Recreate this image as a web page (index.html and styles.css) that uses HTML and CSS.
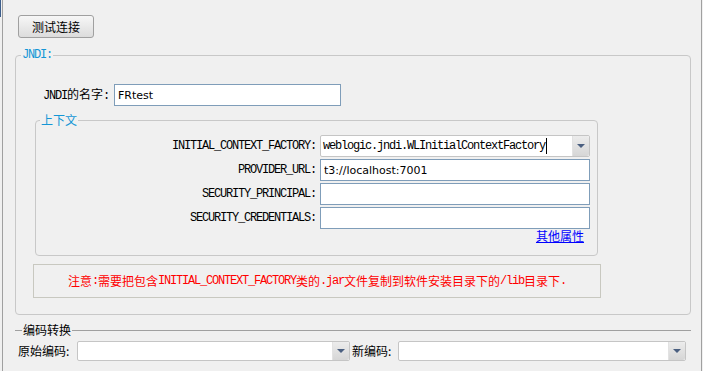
FILE: index.html
```html
<!DOCTYPE html>
<html lang="zh-CN">
<head>
    <meta charset="UTF-8">
    <title>JNDI 连接</title>
    <link rel="stylesheet" href="styles.css">
</head>
<body>
    <div class="window">
        <div class="edge"></div>
        <div class="panel">
            <button class="test-btn">测试连接</button>

            <fieldset class="group jndi">
                <legend class="mono">JNDI:</legend>
                <div class="name-row">
                    <label class="name-label"><span class="mono">JNDI</span>的名字<span class="mono">:</span></label>
                    <input class="field name-field" type="text" value="FRtest">
                </div>

                <fieldset class="group context">
                    <legend>上下文</legend>
                    <div class="props">
                        <label class="mono">INITIAL_CONTEXT_FACTORY:</label>
                        <div class="combo">
                            <span class="combo-text mono">weblogic.jndi.WLInitialContextFactory<span class="caret"></span></span>
                            <span class="combo-btn"><i class="arrow"></i></span>
                        </div>
                        <label class="mono">PROVIDER_URL:</label>
                        <input class="field" type="text" value="t3://localhost:7001">
                        <label class="mono">SECURITY_PRINCIPAL:</label>
                        <input class="field" type="text">
                        <label class="mono">SECURITY_CREDENTIALS:</label>
                        <input class="field" type="text">
                    </div>
                    <div class="more"><a href="#">其他属性</a></div>
                </fieldset>

                <div class="notice">注意<span class="mono">:</span>需要把包含<span class="mono">INITIAL_CONTEXT_FACTORY</span>类的<span class="mono">.jar</span>文件复制到软件安装目录下的<span class="mono">/lib</span>目录下<span class="mono">.</span></div>
            </fieldset>

            <fieldset class="encode">
                <legend>编码转换</legend>
                <div class="encode-row">
                    <label class="enc-label first">原始编码:</label>
                    <div class="combo enc-old">
                        <span class="combo-text"></span>
                        <span class="combo-btn"><i class="arrow"></i></span>
                    </div>
                    <label class="enc-label second">新编码:</label>
                    <div class="combo enc-new">
                        <span class="combo-text"></span>
                        <span class="combo-btn"><i class="arrow"></i></span>
                    </div>
                </div>
            </fieldset>
        </div>
    </div>
</body>
</html>
```

FILE: styles.css
```css
html, body {
    margin: 0;
    height: 100%;
}
body {
    background: #f0f0f0;
    font: 12px/14px "Noto Sans CJK SC", "Liberation Sans", sans-serif;
    color: #000;
    overflow: hidden;
}
.window {
    display: flex;
    height: 371px;
}
.edge {
    width: 2px;
    background: linear-gradient(to right, #3c5e8c 1px, transparent 1px) no-repeat 0 0 / 2px 17px;
}
.panel {
    width: 700px;
    box-sizing: border-box;
    border-left: 1px solid #a0a0a0;
    border-right: 1px solid #a0a0a0;
}
/* 等宽西文字体，模拟宋体的半角字符 */
.mono {
    font-family: "Liberation Mono", monospace;
    font-size: 12px;
    letter-spacing: -1.2px;
}
.test-btn {
    display: block;
    margin: 15px 0 0 15px;
    width: 76px;
    height: 23px;
    padding: 0;
    border: 1px solid #a0a0a0;
    border-radius: 3px;
    background: linear-gradient(#f7f7f7, #dcdcdc);
    font: 12px/14px "Noto Sans CJK SC", sans-serif;
    color: #000;
}
fieldset {
    margin: 0;
    padding: 0;
    min-width: 0;
}
fieldset.group {
    border: 1px solid #c8c8c8;
    border-radius: 4px;
}
legend {
    padding: 0 1px;
    line-height: 14px;
    color: #1496d6;
}
.jndi {
    margin: 10px 10px 0 12px;
    padding: 22px 0 16px;
}
.jndi > legend {
    margin-left: 5px;
}
.name-row {
    display: flex;
    align-items: center;
    margin-left: 27px;
    gap: 5px;
}
.field {
    box-sizing: border-box;
    height: 22px;
    margin: 0;
    padding: 0 0 0 3px;
    border: 1px solid #7f9db9;
    background: #fff;
    font: 11px "DejaVu Sans", sans-serif;
    color: #000;
    outline: none;
}
.name-field {
    width: 227px;
}
.context {
    margin: 7px 92px 0 19px;
    padding: 8px 7px 12px 0;
}
.context > legend {
    margin-left: 4px;
}
.props {
    display: grid;
    grid-template-columns: 1fr 270px;
    grid-auto-rows: 22px;
    column-gap: 4px;
    row-gap: 2px;
}
.props label {
    align-self: center;
    text-align: right;
}
.props .field {
    width: 100%;
}
.combo {
    display: flex;
    box-sizing: border-box;
    background: #fff;
    border: 1px solid #c5c5c5;
    border-radius: 2px;
}
.combo-text {
    flex: 1;
    display: flex;
    align-items: center;
    padding-left: 2px;
    white-space: nowrap;
}
.caret {
    display: inline-block;
    width: 1px;
    height: 16px;
    margin-left: 1px;
    background: #000;
}
.combo-btn {
    width: 16px;
    display: flex;
    align-items: center;
    justify-content: center;
    background: linear-gradient(#ececec, #d6d6d6);
    border-left: 1px solid #e2e2e2;
    border-radius: 0 2px 2px 0;
}
.arrow {
    width: 0;
    height: 0;
    border-left: 4px solid transparent;
    border-right: 4px solid transparent;
    border-top: 4px solid #4a5f80;
}
.more {
    text-align: right;
    padding-right: 6px;
}
.more a {
    color: #0000ff;
    text-decoration: underline;
}
.notice {
    margin: 8px 89px 0 17px;
    height: 34px;
    box-sizing: border-box;
    border: 1px solid #c8c8c0;
    display: flex;
    align-items: center;
    justify-content: center;
    color: #ff0000;
    white-space: nowrap;
}
.encode {
    margin: 8px 10px 0 12px;
    padding: 4px 0 0 3px;
    border: 0;
    border-top: 1px solid #a0a0a0;
}
.encode > legend {
    margin-left: 4px;
    color: #000;
}
.encode-row {
    display: flex;
    height: 20px;
}
.enc-label {
    align-self: center;
}
.enc-label.first {
    width: 59px;
}
.enc-label.second {
    width: 46px;
    margin-left: 2px;
}
.enc-old {
    width: 273px;
}
.enc-new {
    width: 288px;
}
```
